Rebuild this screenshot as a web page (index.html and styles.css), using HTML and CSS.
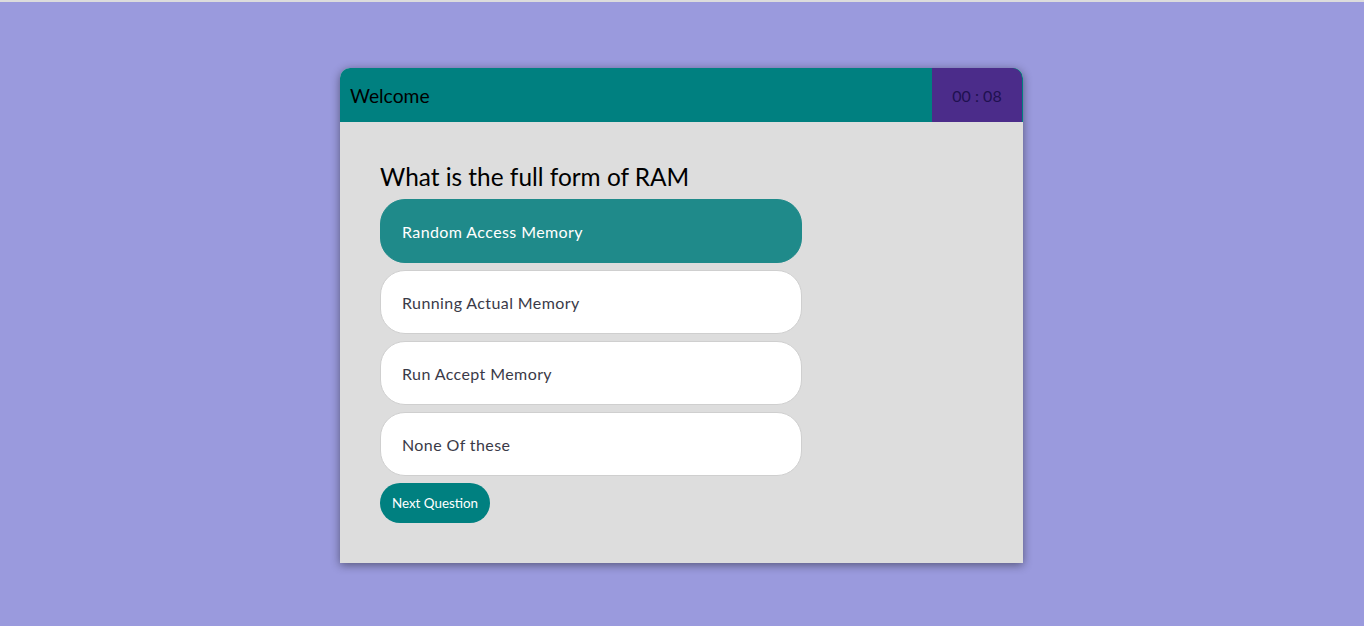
FILE: index.html
```html
<!DOCTYPE html>
<html>
<head>
<meta charset="utf-8">
<link rel="stylesheet" href="styles.css">
</head>
<body>
<div class="page">
  <div class="card">
    <div class="card-header">
      <div class="title">Welcome</div>
      <div class="timer">00 : 08</div>
    </div>
    <div class="card-body">
      <div class="question">What is the full form of RAM</div>
      <div class="options">
        <div class="option selected">Random Access Memory</div>
        <div class="option">Running Actual Memory</div>
        <div class="option">Run Accept Memory</div>
        <div class="option">None Of these</div>
      </div>
      <button class="next">Next Question</button>
    </div>
  </div>
</div>
</body>
</html>
```

FILE: styles.css
```css
html, body {
  margin: 0;
  padding: 0;
  height: 100%;
}
body {
  background: #9a9add;
  border-top: 2px solid #dcdcdc;
  box-sizing: border-box;
  font-family: "Lato", "Noto Sans", sans-serif;
}
.page {
  display: flex;
  justify-content: center;
  padding-top: 66px;
}
.card {
  width: 683px;
  margin-right: 1px;
  background: #dddddd;
  border-radius: 10px 10px 0 0;
  box-shadow: 0 2px 10px rgba(0,0,0,0.45);
}
.card-header {
  display: flex;
  height: 54px;
  background: #008080;
  border-radius: 10px 10px 0 0;
  overflow: hidden;
}
.title {
  flex: 1;
  display: flex;
  align-items: center;
  padding-left: 10px;
  font-size: 19.3px;
  color: #000;
}
.timer {
  width: 90px;
  margin-right: 1px;
  background: #4b2c8a;
  display: flex;
  align-items: center;
  justify-content: center;
  font-size: 16px;
  color: #1f1150;
  border-top-right-radius: 10px;
}
.card-body {
  padding: 40px;
}
.question {
  font-size: 24.4px;
  line-height: 30px;
  color: #000;
  margin-bottom: 7px;
}
.options {
  display: flex;
  flex-direction: column;
  gap: 7px;
  width: 422px;
}
.option {
  box-sizing: border-box;
  height: 64px;
  display: flex;
  align-items: center;
  padding-left: 21px;
  padding-top: 1px;
  background: #ffffff;
  border: 1px solid #cfcfcf;
  border-radius: 25px;
  font-size: 16px;
  letter-spacing: 0.4px;
  color: #3a3a48;
}
.option.selected {
  background: #1f8a8a;
  border-color: #1f8a8a;
  color: #ffffff;
}
.next {
  margin-top: 7px;
  height: 40px;
  width: 110px;
  border: none;
  border-radius: 20px;
  background: #008080;
  color: #ffffff;
  font-family: "Lato", "Noto Sans", sans-serif;
  font-size: 13.4px;
  padding: 0;
}
```
